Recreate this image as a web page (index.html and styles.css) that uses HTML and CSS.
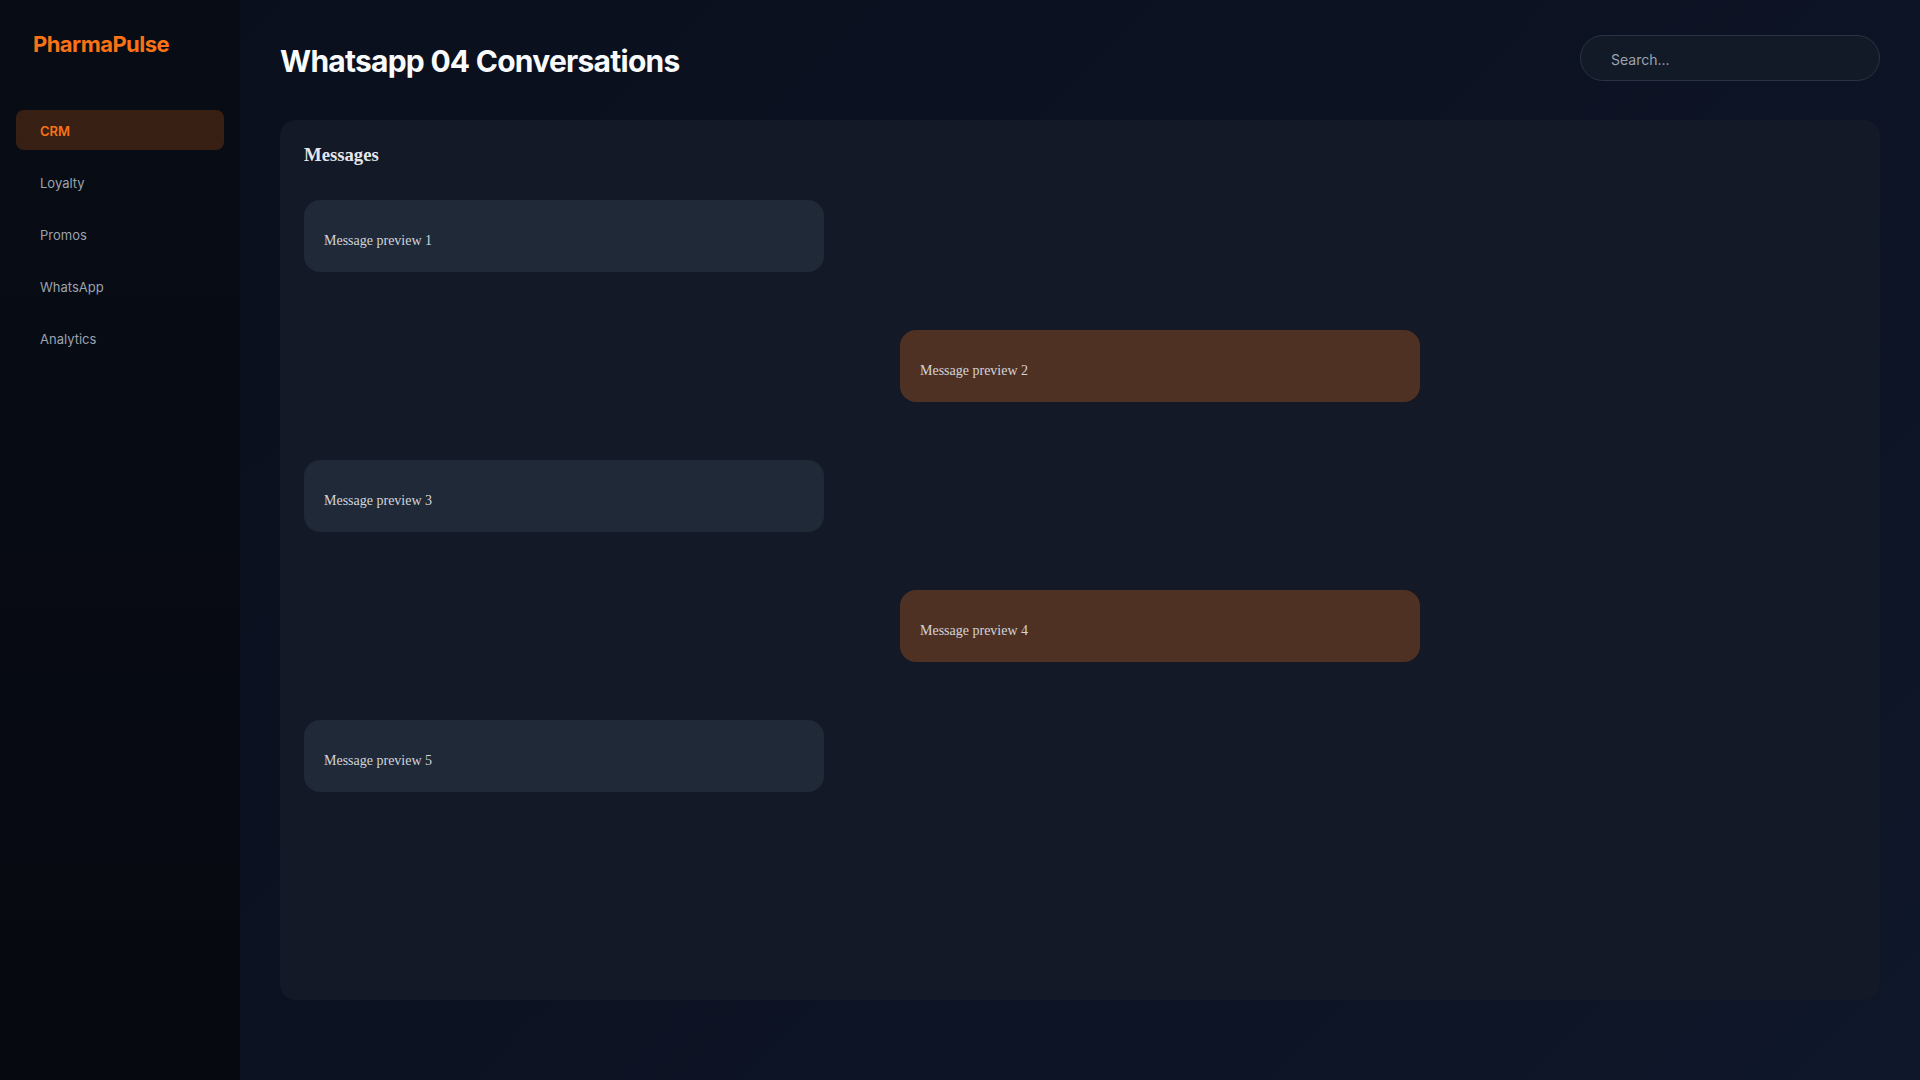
FILE: index.html
```html
<!DOCTYPE html>
<html lang="en">
<head>
<meta charset="utf-8">
<title>Whatsapp 04 Conversations</title>
<link rel="stylesheet" href="styles.css">
</head>
<body>
<div class="app">
  <aside class="sidebar">
    <div class="logo">PharmaPulse</div>
    <nav class="nav">
      <a class="nav-item active">CRM</a>
      <a class="nav-item">Loyalty</a>
      <a class="nav-item">Promos</a>
      <a class="nav-item">WhatsApp</a>
      <a class="nav-item">Analytics</a>
    </nav>
  </aside>
  <main class="main">
    <header class="header">
      <h1 class="title">Whatsapp 04 Conversations</h1>
      <input class="search" type="text" placeholder="Search...">
    </header>
    <section class="card">
      <h3 class="card-title">Messages</h3>
      <div class="messages">
        <div class="bubble in">Message preview 1</div>
        <div class="bubble out">Message preview 2</div>
        <div class="bubble in">Message preview 3</div>
        <div class="bubble out">Message preview 4</div>
        <div class="bubble in">Message preview 5</div>
      </div>
    </section>
  </main>
</div>
</body>
</html>
```
FILE: styles.css
```css
html, body {
  margin: 0;
  padding: 0;
  height: 100%;
}
body {
  background: linear-gradient(135deg, #0a0f1c 0%, #0c1222 50%, #0f172a 100%);
  color: #e5e7eb;
  font-family: Inter, "Noto Sans", sans-serif;
}
.app {
  display: flex;
  height: 100vh;
}
.sidebar {
  width: 240px;
  flex: 0 0 240px;
  box-sizing: border-box;
  padding: 30px 16px;
  background: linear-gradient(180deg, #080c15 0%, #060910 100%);
}
.logo {
  padding: 0 17px;
  font-size: 22px;
  line-height: 28px;
  font-weight: 700;
  letter-spacing: -0.025em;
  color: #f97316;
  margin-bottom: 52px;
}
.nav {
  display: flex;
  flex-direction: column;
  gap: 12px;
}
.nav-item {
  display: flex;
  align-items: center;
  height: 40px;
  box-sizing: border-box;
  padding: 2px 24px 0;
  border-radius: 8px;
  font-size: 13px;
  color: #9ca3af;
  cursor: pointer;
}
.nav-item.active {
  background: rgba(249, 115, 22, 0.2);
  color: #f97316;
  font-weight: 600;
}
.main {
  flex: 1;
  box-sizing: border-box;
  padding: 35px 40px 0;
}
.header {
  display: flex;
  justify-content: space-between;
  align-items: flex-start;
  height: 46px;
  margin-bottom: 39px;
}
.title {
  margin: 8px 0 0;
  font-size: 30px;
  line-height: 36px;
  font-weight: 700;
  letter-spacing: -0.025em;
  color: #f9fafb;
}
.search {
  width: 300px;
  height: 46px;
  box-sizing: border-box;
  padding: 2px 30px 0;
  border-radius: 999px;
  border: 1px solid #2a3344;
  background: #131a27;
  color: #e5e7eb;
  font-family: Inter, "Noto Sans", sans-serif;
  font-size: 14px;
  outline: none;
}
.search::placeholder {
  color: #9ca3af;
}
.card {
  height: 880px;
  box-sizing: border-box;
  padding: 24px;
  border-radius: 16px;
  background: #131927;
}
.card-title {
  margin: 0 0 34px;
  font-family: "Liberation Serif", serif;
  font-size: 18.72px;
  line-height: 22px;
  font-weight: 700;
  color: #e5e7eb;
}
.messages {
  max-width: 1116px;
  display: flex;
  flex-direction: column;
  gap: 58px;
}
.bubble {
  width: 520px;
  box-sizing: border-box;
  padding: 33px 20px 23px;
  border-radius: 16px;
  font-family: "Liberation Serif", serif;
  font-size: 14px;
  line-height: 16px;
  color: #d1d5db;
}
.bubble.in {
  align-self: flex-start;
  background: #1f2937;
}
.bubble.out {
  align-self: flex-end;
  background: #4f3124;
}
```
